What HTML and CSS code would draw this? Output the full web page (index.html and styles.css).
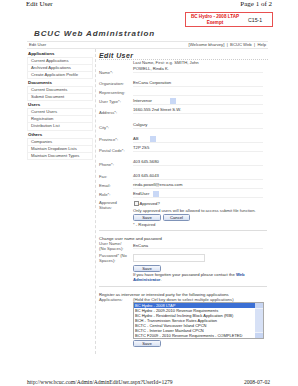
FILE: index.html
```html
<!DOCTYPE html>
<html>
<head>
<meta charset="utf-8">
<title>Edit User</title>
<link rel="stylesheet" href="styles.css">
</head>
<body>
<div class="page">
  <div class="print-head"><span>Edit User</span><span>Page 1 of 2</span></div>
  <div class="stamp-row">
    <div class="stamp">
      <div class="stamp-red">BC Hydro - 2008 LTAP<br>Exempt</div>
      <div class="stamp-no">C15-1</div>
    </div>
  </div>
  <h1 class="site-title">BCUC Web Administration</h1>
  <div class="navbar"><span>Edit User</span><span>[Welcome bharvey] &nbsp;| &nbsp;BCUC Web &nbsp;| &nbsp;Help</span></div>
  <div class="layout">
    <aside class="sidebar">
      <div class="side-head">Applications</div>
      <ul class="side-list">
        <li>Current Applications</li>
        <li>Archived Applications</li>
        <li>Create Application Profile</li>
      </ul>
      <div class="side-head">Documents</div>
      <ul class="side-list">
        <li>Current Documents</li>
        <li>Submit Document</li>
      </ul>
      <div class="side-head">Users</div>
      <ul class="side-list">
        <li>Current Users</li>
        <li>Registration</li>
        <li>Distribution List</li>
      </ul>
      <div class="side-head">Others</div>
      <ul class="side-list">
        <li>Companies</li>
        <li>Maintain Dropdown Lists</li>
        <li>Maintain Document Types</li>
      </ul>
    </aside>
    <main class="content">
      <h2 class="content-title">Edit User</h2>
      <div class="form">
        <div class="lbl"></div><div class="hint">Last Name, First: e.g. SMITH, John</div>
        <div class="lbl">Name*:</div><div class="val up3">POWELL, Rinda K.</div>
        <div class="lbl">Organization:</div><div class="val">EnCana Corporation</div>
        <div class="lbl">Representing:</div><div class="val">&nbsp;</div>
        <div class="lbl">User Type*:</div><div class="val"><span class="select sel-type">Intervenor<i class="arrow"></i></span></div>
        <div class="lbl">Address*:</div><div class="val up2">1660-555 2nd Street S.W.</div>
        <div class="lbl">City*:</div><div class="val up2">Calgary</div>
        <div class="lbl">Province*:</div><div class="val"><span class="select sel-prov">AB<i class="arrow"></i></span></div>
        <div class="lbl">Postal Code*:</div><div class="val up2">T2P 2S5</div>
        <div class="lbl">Phone*:</div><div class="val up2">403 645-5680</div>
        <div class="lbl">Fax:</div><div class="val">403 645-6043</div>
        <div class="lbl">Email:</div><div class="val">rinda.powell@encana.com</div>
        <div class="lbl">Role*:</div><div class="val"><span class="select sel-role">EndUser<i class="arrow"></i></span></div>
        <div class="lbl lbl-top">Approved<br>Status:</div>
        <div class="approve">
          <div class="check-line"><span class="checkbox"></span>Approved?</div>
          <div class="note">Only approved users will be allowed to access submit file function.</div>
          <div class="btns"><span class="btn">Save</span><span class="btn btn-cancel">Cancel</span></div>
          <div class="note req">* - Required</div>
        </div>
      </div>
      <div class="sep"></div>
      <div class="section-title">Change user name and password</div>
      <div class="form form2">
        <div class="lbl">User Name/<br>(No Spaces):</div><div class="val">EnCana</div>
        <div class="lbl lbl-pw">Password* (No<br>Spaces):</div><div class="pw-cell"><span class="input"></span></div>
        <div class="lbl"></div>
        <div class="after-pw">
          <span class="btn">Save</span>
          <div class="forgot">If you have forgotten your password please contact the <a class="link">Web<br>Administrator</a>.</div>
        </div>
      </div>
      <div class="sep sep2"></div>
      <div class="section-title">Register as intervenor or interested party for the following applications</div>
      <div class="form form3">
        <div class="lbl">Applications:</div>
        <div class="apps">
          <div class="hint2">(Hold the Ctrl key down to select multiple applications)</div>
          <div class="listbox">
            <ul class="options">
              <li class="selected">BC Hydro - 2008 LTAP</li>
              <li>BC Hydro - 2009-2010 Revenue Requirements</li>
              <li>BC Hydro - Residential Inclining Block Application (RIB)</li>
              <li>BCH - Transmission Service Rates Application</li>
              <li>BCTC - Central Vancouver Island CPCN</li>
              <li>BCTC - Interior Lower Mainland CPCN</li>
              <li>BCTC F2009 - 2010 Revenue Requirements - COMPLETED</li>
            </ul>
            <div class="scrollbar"><span class="sb-btn"></span><span class="sb-thumb"></span><span class="sb-btn"></span></div>
          </div>
          <span class="btn btn-last">Save</span>
        </div>
      </div>
    </main>
  </div>
  <div class="print-foot"><span>http://www.bcuc.com/Admin/AdminEditUser.aspx?UserId=1279</span><span>2008-07-02</span></div>
</div>
</body>
</html>
```

FILE: styles.css
```css
* { box-sizing: border-box; }
html, body { margin: 0; padding: 0; }
body {
  width: 298px;
  height: 386px;
  overflow: hidden;
  background: #fff;
  font-family: "Liberation Sans", Arial, sans-serif;
  font-size: 4.2px;
  color: #333;
}
.page { display: flex; flex-direction: column; height: 386px; }

.print-head {
  display: flex;
  justify-content: space-between;
  padding: 0 26px;
  font: 7px/9px "Liberation Serif", serif;
  color: #111;
}

.stamp-row { display: flex; justify-content: flex-end; padding-right: 25px; margin-top: 3px; }
.stamp {
  width: 88px;
  height: 15px;
  border: 1px solid #e85050;
  display: flex;
  align-items: center;
}
.stamp-red {
  width: 58px;
  text-align: center;
  color: #e01515;
  font-weight: bold;
  font-size: 4.6px;
  line-height: 6px;
}
.stamp-no { margin-left: 4px; font-size: 5.2px; color: #222; }

.site-title {
  margin: 2px 0 0 34px;
  font: italic bold 8px/9px "Liberation Sans", Arial, sans-serif;
  letter-spacing: 0.9px;
  color: #3a3a3a;
}

.navbar {
  margin: 3px 30px 0 27px;
  height: 8px;
  border-top: 1px solid #e6e6e6;
  border-bottom: 1px solid #e6e6e6;
  line-height: 6px;
  padding: 0 2px;
  display: flex;
  justify-content: space-between;
  color: #444;
}

.layout { display: flex; margin-left: 27px; width: 241px; }

.sidebar { width: 66px; padding-top: 0.5px; }
.side-head {
  height: 7.1px;
  line-height: 7.1px;
  font-weight: bold;
  font-size: 4.4px;
  color: #222;
  padding-left: 1px;
}
.side-list { list-style: none; margin: 0; padding: 0; border-top: 1px solid #f0f0f0; }
.side-list li {
  height: 7.1px;
  line-height: 6px;
  border: 1px solid #f0f0f0;
  border-top: none;
  padding-left: 3px;
  color: #444;
}

.content {
  flex: 1;
  margin-left: 2px;
  border-left: 1px dashed #dddddd;
  padding-left: 3px;
  padding-bottom: 7px;
}
.content-title {
  margin: 0;
  height: 10.5px;
  padding-top: 1.5px;
  font: italic bold 7px/9px "Liberation Sans", Arial, sans-serif;
  letter-spacing: 0.4px;
  color: #333;
  border-bottom: 1px dotted #cccccc;
}

.form {
  display: grid;
  grid-template-columns: 34px 135px;
  grid-template-rows: 6px 14px 8px 10px 8px 14px 16px 8px 14px 14px 10px 8px 10px auto;
  align-items: center;
}
.lbl { color: #555; line-height: 5px; }
.lbl-top { align-self: start; padding-top: 0.5px; }
.hint, .hint2 { line-height: 5px; color: #444; }
.val {
  line-height: 5px;
  width: 130px;
  border-bottom: 1px solid #efefef;
  padding-bottom: 0.5px;
}
.up2 { margin-bottom: 4px; }
.up3 { margin-bottom: 6px; }

.select { display: inline-flex; justify-content: space-between; align-items: center; height: 5px; }
.sel-type { width: 43px; }
.sel-prov { width: 23px; }
.sel-role { width: 26px; }
.arrow { display: inline-block; width: 6px; height: 6px; background: #c9d8f6; }

.approve { align-self: start; padding-top: 1.5px; }
.check-line { line-height: 5px; display: flex; align-items: center; }
.checkbox {
  display: inline-block;
  width: 4.5px;
  height: 4.5px;
  border: 0.7px solid #8a8a8a;
  background: #f6f6f6;
  margin: 0 1px 0 1px;
}
.note { line-height: 5px; margin-top: 2px; color: #444; }
.btns { display: flex; gap: 2px; margin-top: 0.5px; }
.btn {
  display: inline-block;
  width: 28px;
  height: 7px;
  border: 1px solid #7f93b8;
  border-radius: 1.5px;
  background: linear-gradient(#f6f8fd, #d6e0f2);
  line-height: 5px;
  text-align: center;
  color: #223;
}
.btn-cancel { width: 27px; }
.req { margin-top: 1.5px; }

.sep { margin-top: 3px; border-top: 1px solid #dddddd; width: 168px; }
.section-title { margin-top: 5px; line-height: 5px; color: #333; }

.form2 { grid-template-rows: 10px 10px auto; }
.lbl-pw { margin-top: 4px; }
.pw-cell { margin-top: 4px; display: flex; align-items: center; }
.input { display: inline-block; width: 72px; height: 8px; border: 1px solid #dddddd; }
.after-pw { padding-top: 3.5px; }
.forgot { line-height: 5px; margin-top: 0.5px; color: #333; }
.link { color: #1c4f9c; font-weight: bold; }

.sep2 { margin-top: 3.5px; }

.form3 { grid-template-rows: auto; align-items: start; }
.apps { display: flex; flex-direction: column; align-items: flex-start; }
.listbox {
  width: 131px;
  height: 37px;
  border: 1px solid #a9a9a9;
  display: flex;
  background: #fff;
}
.options { list-style: none; margin: 0; padding: 0; flex: 1; color: #222; font-size: 4px; }
.options li { line-height: 5px; height: 5px; padding-left: 1px; white-space: nowrap; overflow: hidden; }
.options li.selected { background: #3b6fd4; color: #fff; }
.scrollbar { width: 8px; display: flex; flex-direction: column; background: #eef2fa; }
.sb-btn { height: 5px; background: #c8d6f3; }
.sb-thumb { flex: 1; margin: 1px 0; background: #d7e1f6; }
.btn-last { margin-top: 1px; }

.print-foot {
  margin-top: auto;
  display: flex;
  justify-content: space-between;
  padding: 0 28px 0 27px;
  font: 5.6px/8px "Liberation Serif", serif;
  color: #222;
}
```
